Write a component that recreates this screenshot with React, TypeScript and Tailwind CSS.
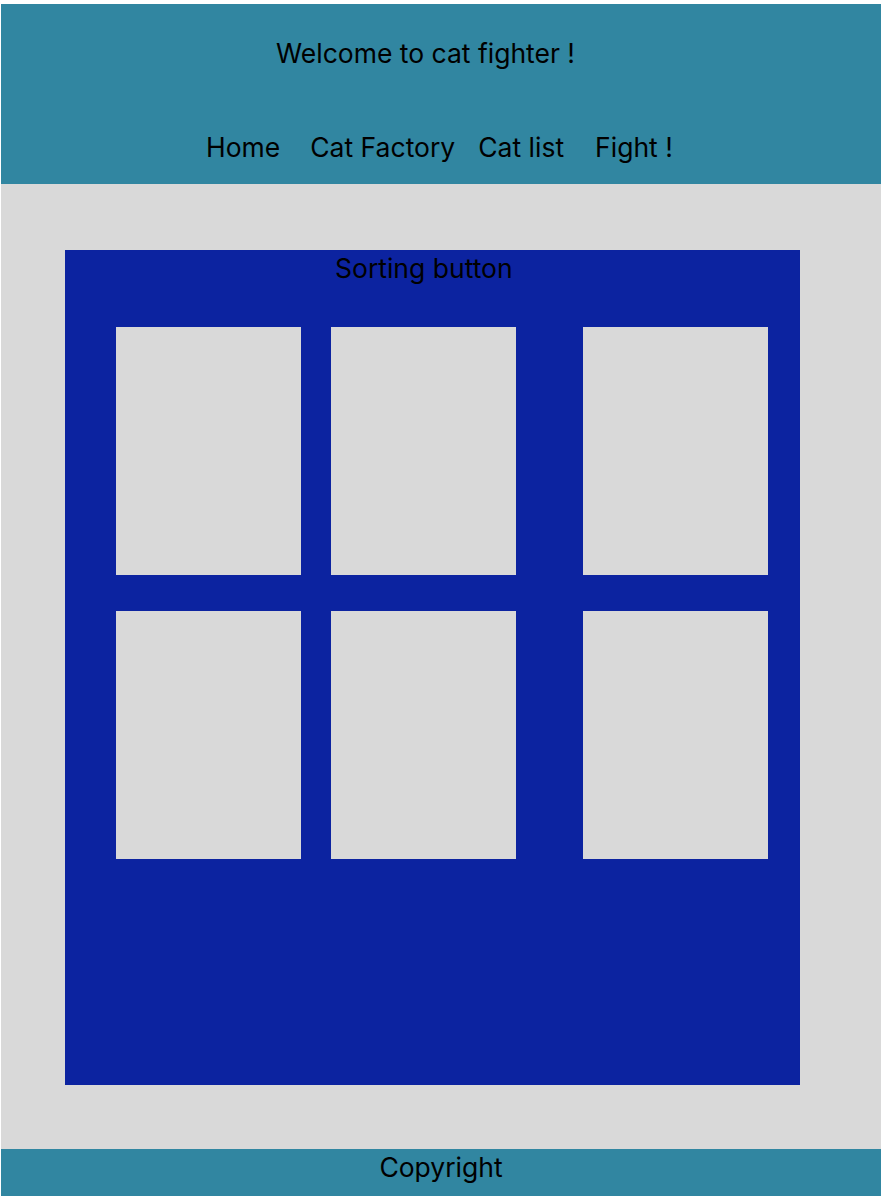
const navItems = [
  { label: 'Home', cls: 'ml-[205px]' },
  { label: 'Cat Factory', cls: 'ml-[30px]' },
  { label: 'Cat list', cls: 'ml-[23px]' },
  { label: 'Fight !', cls: 'ml-[31px]' },
];

function CatCard({ className = '' }: { className?: string }) {
  return <div className={`h-[248px] w-[185px] bg-[#d9d9d9] ${className}`} />;
}

export default function App() {
  return (
    <div className="min-h-[1199px] bg-white pt-[4px] pl-px pr-px pb-[3px] font-['Inter','Liberation_Sans',sans-serif] text-black">
      <header className="h-[180px] bg-[#3186a1] pt-[33px]">
        <div className="ml-[275px] text-[26.5px] leading-[32px]">Welcome to cat fighter !</div>
        <nav className="mt-[62px] flex">
          {navItems.map((item) => (
            <span key={item.label} className={`${item.cls} text-[26.5px] leading-[32px]`}>
              {item.label}
            </span>
          ))}
        </nav>
      </header>

      <main className="h-[965px] bg-[#d9d9d9] pt-[66px] pl-[64px]">
        <section className="h-[835px] w-[735px] bg-[#0c23a0]">
          <div className="ml-[270px] pt-[2px] text-[26.5px] leading-[32px]">Sorting button</div>
          <div className="mt-[43px] flex flex-col gap-[36px] pl-[51px]">
            {[0, 1].map((row) => (
              <div key={row} className="flex">
                <CatCard />
                <CatCard className="ml-[30px]" />
                <CatCard className="ml-[67px]" />
              </div>
            ))}
          </div>
        </section>
      </main>

      <footer className="flex h-[47px] justify-center bg-[#3186a1] pt-[2px] text-[26.5px] leading-[32px]">
        <span>Copyright</span>
      </footer>
    </div>
  );
}
